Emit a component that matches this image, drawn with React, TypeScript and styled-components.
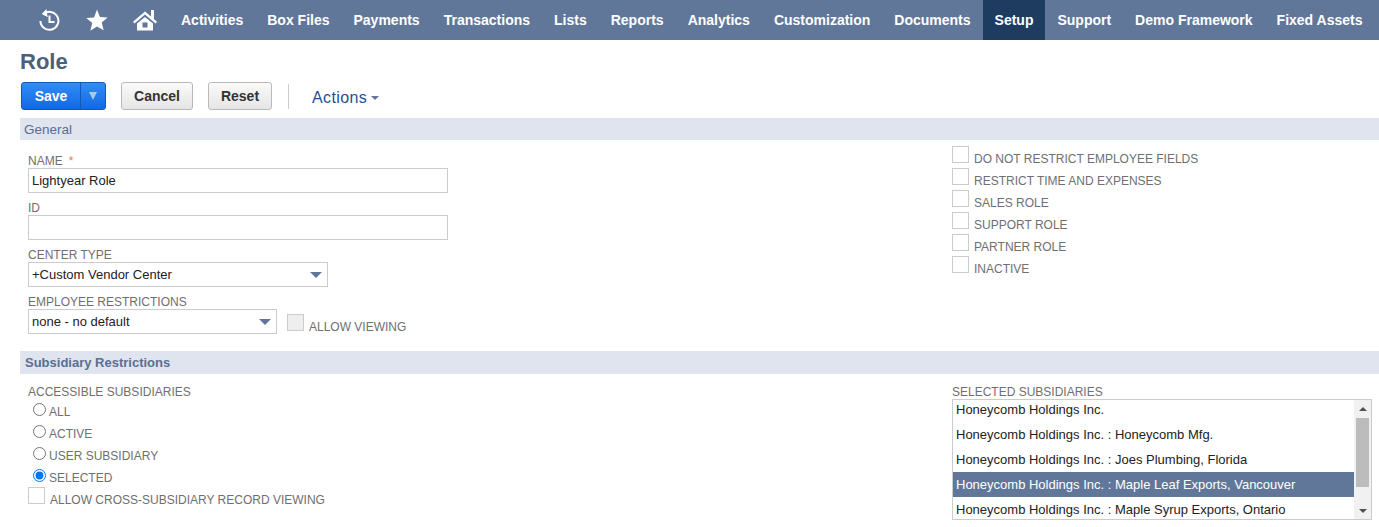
import React from "react";
import styled, { createGlobalStyle } from "styled-components";

const GlobalStyle = createGlobalStyle`
  html, body {
    margin: 0;
    height: 527px;
    overflow: hidden;
    background: #fff;
    font-family: "Liberation Sans", Arial, sans-serif;
  }
`;

const NavBar = styled.nav`
  display: flex;
  align-items: stretch;
  height: 40px;
  padding-left: 37px;
  background-color: #607799;
`;

const NavIcons = styled.div`
  display: flex;
  align-items: center;
  gap: 24px;
  margin-right: 12px;
`;

const NavIcon = styled.div`
  display: flex;
  align-items: center;
  justify-content: center;
  width: 24px;
`;

const NavItem = styled.a<{ active?: boolean }>`
  display: flex;
  align-items: center;
  padding: 0 12px;
  font-size: 14px;
  font-weight: bold;
  color: #fff;
  white-space: nowrap;
  background-color: ${({ active }) => (active ? "#1d3c60" : "transparent")};
`;

const Title = styled.h1`
  margin: 9px 0 0 20px;
  height: 26px;
  font-size: 22px;
  line-height: 26px;
  font-weight: bold;
  color: #4d5f79;
`;

const Toolbar = styled.div`
  display: flex;
  align-items: center;
  height: 28px;
  margin: 7px 0 8px 21px;
`;

const SaveButton = styled.div`
  display: flex;
  width: 85px;
  height: 28px;
  box-sizing: border-box;
  border: 1px solid #125ab2;
  border-radius: 3px;
  background: linear-gradient(#2f8ef8, #1467e2);
  font-size: 14px;
  font-weight: bold;
  color: #fff;
`;

const SaveLabel = styled.div`
  display: flex;
  align-items: center;
  justify-content: center;
  width: 58px;
  border-right: 1px solid #125ab2;
`;

const SaveCaret = styled.div`
  display: flex;
  flex: 1;
  align-items: center;
  justify-content: center;

  &::after {
    content: "";
    width: 0;
    height: 0;
    border-left: 4px solid transparent;
    border-right: 4px solid transparent;
    border-top: 8px solid #a9c8ee;
  }
`;

const Button = styled.div<{ width: number }>`
  display: flex;
  align-items: center;
  justify-content: center;
  width: ${({ width }) => width}px;
  height: 28px;
  box-sizing: border-box;
  margin-left: 15px;
  border: 1px solid #b9b9b9;
  border-radius: 3px;
  background: linear-gradient(#fafafa, #e5e5e5);
  font-size: 14px;
  font-weight: bold;
  color: #333;
`;

const Divider = styled.div`
  width: 1px;
  height: 25px;
  margin-left: 16px;
  background-color: #ccc;
`;

const Actions = styled.div`
  display: flex;
  align-items: center;
  gap: 4px;
  margin: 4px 0 0 23px;
  font-size: 16px;
  letter-spacing: 0.4px;
  color: #1f4f96;
`;

const SectionBar = styled.div<{ height: number; pad: number; bold?: boolean }>`
  height: ${({ height }) => height}px;
  margin-left: 20px;
  padding-left: ${({ pad }) => pad}px;
  background-color: #dfe4ef;
  font-size: ${({ bold }) => (bold ? 13 : 13.5)}px;
  font-weight: ${({ bold }) => (bold ? "bold" : "normal")};
  line-height: ${({ height, bold }) => (bold ? height : height + 2)}px;
  color: #5a6f92;
`;

const Columns = styled.div<{ height: number }>`
  display: grid;
  grid-template-columns: 924px 1fr;
  height: ${({ height }) => height}px;
  padding-left: 28px;
`;

const Column = styled.div<{ top: number }>`
  padding-top: ${({ top }) => top}px;
`;

const Label = styled.div`
  height: 14px;
  font-size: 12px;
  line-height: 14px;
  color: #6f6f6f;
  white-space: nowrap;
`;

const Required = styled.span`
  margin-left: 6px;
  color: #d98a1f;
`;

const Field = styled.div`
  height: 47px;
`;

const TextBox = styled.div<{ width: number }>`
  display: flex;
  align-items: center;
  justify-content: space-between;
  width: ${({ width }) => width}px;
  height: 25px;
  box-sizing: border-box;
  padding: 0 5px 0 3px;
  border: 1px solid #ccc;
  font-size: 13px;
  color: #222;
`;

const Caret = styled.span<{ size: number }>`
  width: 0;
  height: 0;
  border-left: ${({ size }) => size}px solid transparent;
  border-right: ${({ size }) => size}px solid transparent;
  border-top: ${({ size }) => size}px solid #607799;
`;

const SelectRow = styled.div`
  display: flex;
`;

const Check = styled.span<{ shaded?: boolean }>`
  display: block;
  flex: none;
  width: 17px;
  height: 17px;
  box-sizing: border-box;
  border: 1px solid #ccc;
  background-color: ${({ shaded }) => (shaded ? "#eee" : "#fff")};
`;

const AllowViewing = styled.div`
  display: flex;
  margin: 5px 0 0 10px;
`;

const CheckText = styled(Label)`
  margin: 6px 0 0 5px;
`;

const CheckRow = styled.div`
  display: flex;
  height: 22px;
`;

const CrossViewRow = styled(CheckRow)`
  margin-top: -1px;
`;

const RadioGroup = styled.div`
  padding: 1px 0 0 5px;
`;

const RadioRow = styled.label`
  display: flex;
  height: 22px;
`;

const Radio = styled.input`
  width: 13px;
  height: 13px;
  margin: 3px 3px 0 0;
`;

const RadioText = styled(Label)`
  margin-top: 5px;
`;

const ListBox = styled.div`
  display: flex;
  width: 420px;
  height: 121px;
  box-sizing: border-box;
  border: 1px solid #ccc;
  overflow: hidden;
`;

const ListRows = styled.div`
  flex: 1;
  overflow: hidden;
`;

const ListRow = styled.div<{ selected?: boolean }>`
  height: 25px;
  padding-left: 3px;
  font-size: 13px;
  line-height: 25px;
  color: ${({ selected }) => (selected ? "#fff" : "#222")};
  background-color: ${({ selected }) => (selected ? "#607799" : "#fff")};
  white-space: nowrap;

  &:first-child {
    margin-top: -3px;
  }
`;

const ScrollBar = styled.div`
  display: flex;
  flex-direction: column;
  align-items: center;
  width: 17px;
  padding-top: 7px;
  box-sizing: border-box;
  background-color: #f1f1f1;
`;

const ScrollUp = styled.span`
  width: 0;
  height: 0;
  border-left: 4px solid transparent;
  border-right: 4px solid transparent;
  border-bottom: 4px solid #505050;
`;

const ScrollThumb = styled.div`
  flex: none;
  width: 13px;
  height: 69px;
  margin: 7px 0 22px;
  background-color: #bcbcbc;
`;

const ScrollDown = styled.span`
  width: 0;
  height: 0;
  border-left: 4px solid transparent;
  border-right: 4px solid transparent;
  border-top: 4px solid #505050;
`;

const navItems = [
  "Activities",
  "Box Files",
  "Payments",
  "Transactions",
  "Lists",
  "Reports",
  "Analytics",
  "Customization",
  "Documents",
  "Setup",
  "Support",
  "Demo Framework",
  "Fixed Assets",
];

const roleFlags = [
  "DO NOT RESTRICT EMPLOYEE FIELDS",
  "RESTRICT TIME AND EXPENSES",
  "SALES ROLE",
  "SUPPORT ROLE",
  "PARTNER ROLE",
  "INACTIVE",
];

const radios = ["ALL", "ACTIVE", "USER SUBSIDIARY", "SELECTED"];

const subsidiaries = [
  "Honeycomb Holdings Inc.",
  "Honeycomb Holdings Inc. : Honeycomb Mfg.",
  "Honeycomb Holdings Inc. : Joes Plumbing, Florida",
  "Honeycomb Holdings Inc. : Maple Leaf Exports, Vancouver",
  "Honeycomb Holdings Inc. : Maple Syrup Exports, Ontario",
];

const HistoryIcon = () => (
  <svg width="22" height="24" viewBox="0 0 22 24" fill="none" stroke="#fff" strokeWidth="2">
    <path d="M5 6.5a9 9 0 1 1-2.6 6.5" />
    <path d="M8.5 1.5 4.5 6l5 2.5" fill="#fff" strokeWidth="1" />
    <path d="M11.5 7.5v6.5h5" />
  </svg>
);

const StarIcon = () => (
  <svg width="22" height="22" viewBox="0 0 22 22" fill="#fff">
    <path d="M11 0.5l2.9 7.4 7.8.5-6 5 2 7.8L11 17.4 4.3 21.7l2-7.8-6-5 7.8-.5z" />
  </svg>
);

const HomeIcon = () => (
  <svg width="24" height="24" viewBox="0 0 24 24" fill="#fff">
    <path d="M12 3.5 18 8.6V2h3v9.1l3 2.6-1.5 1.7L12 6.6 1.5 15.4 0 13.7z" />
    <path fillRule="evenodd" d="M4 15.5 12 9l8 6.5V22.5H4zM9.5 14.5v5h5v-5z" />
  </svg>
);

const App: React.FC = () => {
  return (
    <>
      <GlobalStyle />
      <NavBar>
        <NavIcons>
          <NavIcon>
            <HistoryIcon />
          </NavIcon>
          <NavIcon>
            <StarIcon />
          </NavIcon>
          <NavIcon>
            <HomeIcon />
          </NavIcon>
        </NavIcons>
        {navItems.map((item) => (
          <NavItem key={item} active={item === "Setup"}>
            {item}
          </NavItem>
        ))}
      </NavBar>

      <Title>Role</Title>
      <Toolbar>
        <SaveButton>
          <SaveLabel>Save</SaveLabel>
          <SaveCaret />
        </SaveButton>
        <Button width={72}>Cancel</Button>
        <Button width={64}>Reset</Button>
        <Divider />
        <Actions>
          Actions
          <Caret size={4} />
        </Actions>
      </Toolbar>

      <SectionBar height={22} pad={4}>
        General
      </SectionBar>
      <Columns height={211}>
        <Column top={14}>
          <Field>
            <Label>
              NAME<Required>*</Required>
            </Label>
            <TextBox width={420}>Lightyear Role</TextBox>
          </Field>
          <Field>
            <Label>ID</Label>
            <TextBox width={420} />
          </Field>
          <Field>
            <Label>CENTER TYPE</Label>
            <TextBox width={300}>
              +Custom Vendor Center
              <Caret size={6} />
            </TextBox>
          </Field>
          <Field>
            <Label>EMPLOYEE RESTRICTIONS</Label>
            <SelectRow>
              <TextBox width={249}>
                none - no default
                <Caret size={6} />
              </TextBox>
              <AllowViewing>
                <Check shaded />
                <CheckText>ALLOW VIEWING</CheckText>
              </AllowViewing>
            </SelectRow>
          </Field>
        </Column>
        <Column top={6}>
          {roleFlags.map((flag) => (
            <CheckRow key={flag}>
              <Check />
              <CheckText>{flag}</CheckText>
            </CheckRow>
          ))}
        </Column>
      </Columns>

      <SectionBar height={23} pad={5} bold>
        Subsidiary Restrictions
      </SectionBar>
      <Columns height={153}>
        <Column top={11}>
          <Label>ACCESSIBLE SUBSIDIARIES</Label>
          <RadioGroup>
            {radios.map((radio) => (
              <RadioRow key={radio}>
                <Radio type="radio" name="access" defaultChecked={radio === "SELECTED"} />
                <RadioText>{radio}</RadioText>
              </RadioRow>
            ))}
          </RadioGroup>
          <CrossViewRow>
            <Check />
            <CheckText>ALLOW CROSS-SUBSIDIARY RECORD VIEWING</CheckText>
          </CrossViewRow>
        </Column>
        <Column top={11}>
          <Label>SELECTED SUBSIDIARIES</Label>
          <ListBox>
            <ListRows>
              {subsidiaries.map((name, i) => (
                <ListRow key={name} selected={i === 3}>
                  {name}
                </ListRow>
              ))}
            </ListRows>
            <ScrollBar>
              <ScrollUp />
              <ScrollThumb />
              <ScrollDown />
            </ScrollBar>
          </ListBox>
        </Column>
      </Columns>
    </>
  );
};

export default App;
